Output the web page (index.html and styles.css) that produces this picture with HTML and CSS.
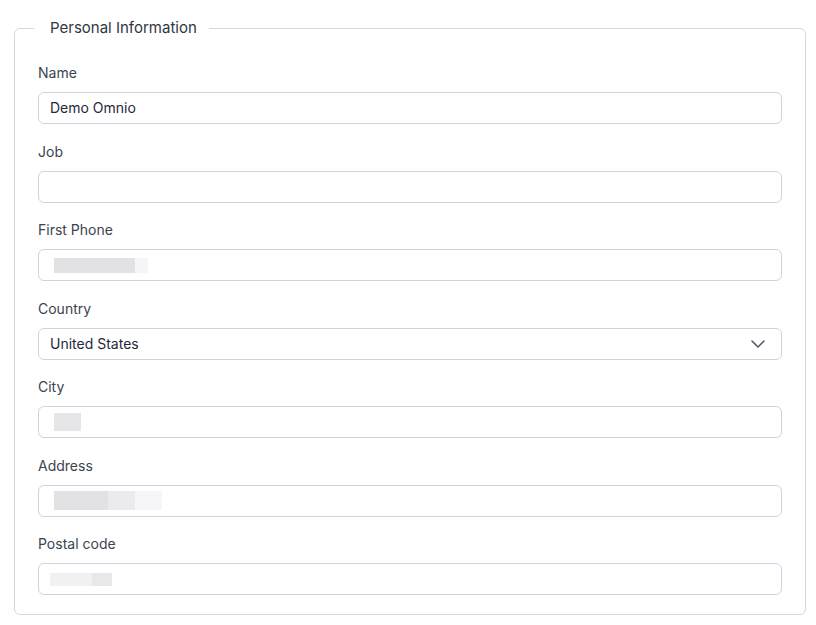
FILE: index.html
```html
<!DOCTYPE html>
<html>
<head>
<meta charset="utf-8">
<link rel="stylesheet" href="styles.css">
</head>
<body>
<div class="page">
  <fieldset class="card">
    <legend class="card-title">Personal Information</legend>
    <div class="field">
      <label class="label">Name</label>
      <div class="input"><span class="value">Demo Omnio</span></div>
    </div>
    <div class="field">
      <label class="label">Job</label>
      <div class="input"></div>
    </div>
    <div class="field">
      <label class="label">First Phone</label>
      <div class="input"><span class="blur blur-phone"><i class="b1"></i><i class="b2"></i></span></div>
    </div>
    <div class="field">
      <label class="label">Country</label>
      <div class="input select"><span class="value">United States</span>
        <svg class="chev" width="14" height="8" viewBox="0 0 14 8"><path d="M1 1l6 6 6-6" fill="none" stroke="#4b5563" stroke-width="1.5" stroke-linecap="round" stroke-linejoin="round"/></svg>
      </div>
    </div>
    <div class="field">
      <label class="label">City</label>
      <div class="input"><span class="blur blur-city"><i class="b1"></i></span></div>
    </div>
    <div class="field">
      <label class="label">Address</label>
      <div class="input"><span class="blur blur-addr"><i class="b1"></i><i class="b2"></i><i class="b3"></i></span></div>
    </div>
    <div class="field">
      <label class="label">Postal code</label>
      <div class="input"><span class="blur blur-postal"><i class="b1"></i><i class="b2"></i></span></div>
    </div>
  </fieldset>
</div>
</body>
</html>
```

FILE: styles.css
```css
* { box-sizing: border-box; }
html, body { margin: 0; padding: 0; background: #ffffff; }
body {
  font-family: Inter, "Noto Sans", "Liberation Sans", sans-serif;
  font-size: 14px;
  color: #374151;
}
.page {
  padding: 18px 10px 0 14px;
}
.card {
  margin: 0;
  border: 1px solid #cfd9e3;
  border-radius: 6px;
  padding: 25px 23px 19px 23px;
  display: flex;
  flex-direction: column;
  gap: 17.5px;
}
.card-title {
  margin-left: -4px;
  padding: 0 12px 0 16px;
  font-size: 15px;
  line-height: 20px;
  color: #2f3744;
}
.field {
  display: flex;
  flex-direction: column;
  gap: 9px;
}
.label {
  line-height: 20px;
  color: #3b4350;
}
.input {
  height: 32px;
  border: 1px solid #cbd5e1;
  border-radius: 6px;
  padding: 0 12px 0 11px;
  display: flex;
  align-items: center;
  color: #1f2937;
}
.value { line-height: 20px; }
.select { justify-content: space-between; padding-right: 16px; }
.chev { display: block; }
.blur { display: flex; align-items: stretch; margin-left: 4px; }
.blur i { display: block; }
.blur-phone { height: 15px; }
.blur-phone .b1 { width: 81px; background: #e2e2e5; }
.blur-phone .b2 { width: 13px; background: #f5f5f7; }
.blur-city { height: 18px; }
.blur-city .b1 { width: 27px; background: #e6e6e8; }
.blur-addr { height: 19px; }
.blur-addr .b1 { width: 54px; background: #e2e2e5; }
.blur-addr .b2 { width: 27px; background: #ebebed; }
.blur-addr .b3 { width: 27px; background: #f6f6f8; }
.blur-postal { height: 13px; margin-left: 0; }
.blur-postal .b1 { width: 42px; background: #f1f1f3; }
.blur-postal .b2 { width: 20px; background: #e8e8ea; }
```
